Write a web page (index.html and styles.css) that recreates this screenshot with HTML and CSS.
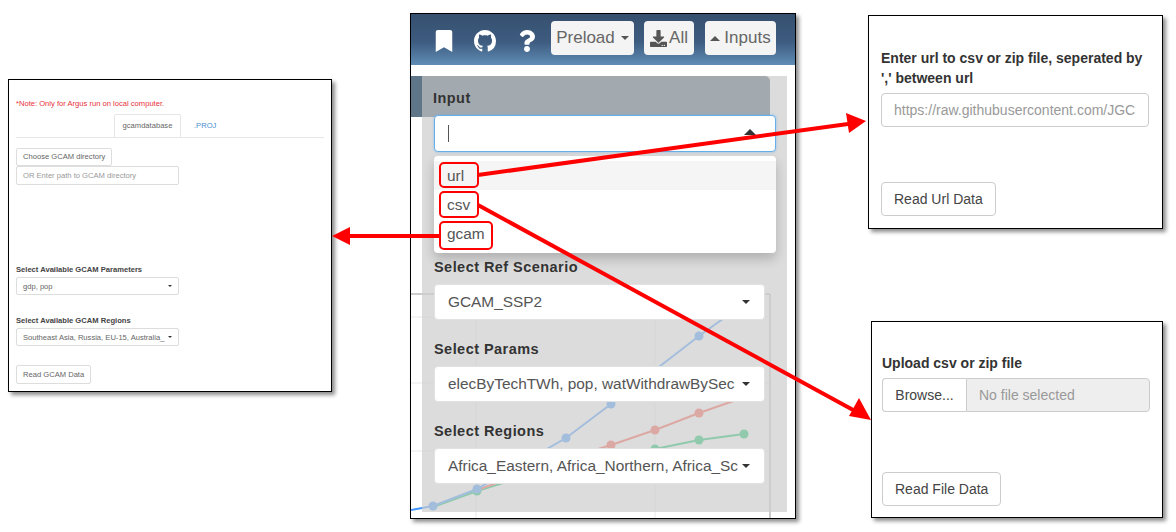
FILE: index.html
```html
<!DOCTYPE html>
<html>
    <head>
        <title>Argus inputs</title>
        <meta charset="UTF-8">
        <link rel="stylesheet" href="styles.css">
    </head>
    <body>
        <!-- left window: gcam -->
        <div class="shot gcamShot">
            <div class="gcamNote">*Note: Only for Argus run on local computer.</div>
            <div class="gcamTabs">
                <div class="gcamTab">gcamdatabase</div>
                <div class="gcamTabLink">.PROJ</div>
            </div>
            <div class="smallBtn chooseBtn">Choose GCAM directory</div>
            <div class="smallBox placeholder">OR Enter path to GCAM directory</div>
            <div class="smallLabel paramsLabel">Select Available GCAM Parameters</div>
            <div class="smallBox smallSelect"><span class="clip">gdp, pop</span><i class="caret"></i></div>
            <div class="smallLabel regionsLabel">Select Available GCAM Regions</div>
            <div class="smallBox smallSelect"><span class="clip">Southeast Asia, Russia, EU-15, Australia_</span><i class="caret"></i></div>
            <div class="smallBtn readGcam">Read GCAM Data</div>
        </div>

        <!-- middle window: app -->
        <div class="shot appShot">
            <div class="appHeader">
                <svg class="navIcon bookmark" viewBox="0 0 384 512"><path d="M0 512V48C0 21.49 21.49 0 48 0h288c26.51 0 48 21.49 48 48v464L192 400 0 512z"/></svg>
                <svg class="navIcon github" viewBox="0 0 16 16"><path d="M8 0C3.58 0 0 3.58 0 8c0 3.54 2.29 6.53 5.47 7.59.4.07.55-.17.55-.38 0-.19-.01-.82-.01-1.49-2.01.37-2.53-.49-2.69-.94-.09-.23-.48-.94-.82-1.13-.28-.15-.68-.52-.01-.53.63-.01 1.08.58 1.23.82.72 1.21 1.87.87 2.33.66.07-.52.28-.87.51-1.07-1.78-.2-3.64-.89-3.64-3.95 0-.87.31-1.59.82-2.15-.08-.2-.36-1.02.08-2.12 0 0 .67-.21 2.2.82.64-.18 1.32-.27 2-.27.68 0 1.36.09 2 .27 1.53-1.04 2.2-.82 2.2-.82.44 1.1.16 1.92.08 2.12.51.56.82 1.27.82 2.15 0 3.07-1.87 3.75-3.65 3.95.29.25.54.73.54 1.48 0 1.07-.01 1.93-.01 2.2 0 .21.15.46.55.38A8.013 8.013 0 0016 8c0-4.42-3.58-8-8-8z"/></svg>
                <svg class="navIcon question" viewBox="0 0 384 512"><path d="M202.021 0C122.202 0 70.503 32.703 29.914 91.026c-7.363 10.58-5.093 25.086 5.178 32.874l43.138 32.709c10.373 7.865 25.132 6.026 33.253-4.148 25.049-31.381 43.63-49.449 82.757-49.449 30.764 0 68.816 19.799 68.816 49.631 0 22.552-18.617 34.134-48.993 51.164-35.423 19.86-82.299 44.576-82.299 106.405V320c0 13.255 10.745 24 24 24h72.471c13.255 0 24-10.745 24-24v-5.773c0-42.86 125.268-44.645 125.268-160.627C377.504 66.256 286.902 0 202.021 0zM192 373.459c-38.196 0-69.271 31.075-69.271 69.271 0 38.195 31.075 69.27 69.271 69.27s69.271-31.075 69.271-69.271-31.075-69.27-69.271-69.27z"/></svg>
                <div class="navBtn preloadBtn">Preload<i class="caret"></i></div>
                <div class="navBtn allBtn"><svg class="dlIcon" viewBox="0 0 512 512"><path d="M216 0h80c13.3 0 24 10.7 24 24v168h87.7c17.8 0 26.7 21.5 14.1 34.1L269.7 378.3c-7.5 7.5-19.8 7.5-27.3 0L90.1 226.1c-12.6-12.6-3.7-34.1 14.1-34.1H192V24c0-13.3 10.7-24 24-24zm296 376v112c0 13.3-10.7 24-24 24H24c-13.3 0-24-10.7-24-24V376c0-13.3 10.7-24 24-24h146.7l49 49c20.1 20.1 52.5 20.1 72.6 0l49-49H488c13.3 0 24 10.7 24 24zm-124 88c0-11-9-20-20-20s-20 9-20 20 9 20 20 20 20-9 20-20zm64 0c0-11-9-20-20-20s-20 9-20 20 9 20 20 20 20-9 20-20z"/></svg>All</div>
                <div class="navBtn inputsBtn"><i class="caret caretUp"></i>Inputs</div>
            </div>
            <div class="appBody">
                <div class="plotBox">
                    <div class="plotTitle"></div>
                    <svg class="plot" viewBox="411 117 384 402">
                        <g class="grid">
                            <path d="M411 317H770M411 383H770M411 451H770M476 294V519M655 294V519"/>
                        </g>
                        <path class="frame" d="M411 294H770V519"/>
                        <g class="series seriesGreen">
                            <path d="M433 507L477 491L566 464L655 449L699 440L744 434"/>
                            <circle cx="477" cy="491" r="4.5"/><circle cx="655" cy="449" r="4.5"/><circle cx="699" cy="440" r="4.5"/><circle cx="744" cy="434" r="4.5"/>
                        </g>
                        <g class="series seriesRed">
                            <path d="M477 490L566 459L611 445L655 430L699 413L745 397"/>
                            <circle cx="611" cy="445" r="4.5"/><circle cx="655" cy="430" r="4.5"/><circle cx="699" cy="413" r="4.5"/>
                        </g>
                        <g class="series seriesBlue">
                            <path d="M411 510L433 506L477 489L566 438L611 404L699 336L745 303"/>
                            <circle cx="433" cy="506" r="4.5"/><circle cx="477" cy="489" r="4.5"/><circle cx="566" cy="438" r="4.5"/><circle cx="611" cy="404" r="4.5"/><circle cx="699" cy="336" r="4.5"/>
                        </g>
                    </svg>
                </div>
                <div class="sidebar">
                    <div class="field inputField">
                        <label class="fieldLabel">Input</label>
                        <div class="selectBox selectOpen"><span class="cursor"></span><i class="caret caretUp"></i></div>
                        <div class="dropdown">
                            <div class="dropItem dropActive">url</div>
                            <div class="dropItem">csv</div>
                            <div class="dropItem">gcam</div>
                        </div>
                    </div>
                    <div class="field">
                        <label class="fieldLabel">Select Ref Scenario</label>
                        <div class="selectBox"><span class="clip">GCAM_SSP2</span><i class="caret"></i></div>
                    </div>
                    <div class="field">
                        <label class="fieldLabel">Select Params</label>
                        <div class="selectBox"><span class="clip">elecByTechTWh, pop, watWithdrawBySec</span><i class="caret"></i></div>
                    </div>
                    <div class="field">
                        <label class="fieldLabel">Select Regions</label>
                        <div class="selectBox"><span class="clip">Africa_Eastern, Africa_Northern, Africa_Sc</span><i class="caret"></i></div>
                    </div>
                </div>
            </div>
        </div>

        <!-- right windows: url and csv -->
        <div class="shot urlShot">
            <div class="panelLabel">Enter url to csv or zip file, seperated by ',' between url</div>
            <div class="panelInput placeholder"><span class="clip">https://raw.githubusercontent.com/JGC</span></div>
            <div class="panelBtn urlBtn">Read Url Data</div>
        </div>
        <div class="shot csvShot">
            <div class="panelLabel">Upload csv or zip file</div>
            <div class="fileGroup">
                <div class="browseBtn">Browse...</div>
                <div class="fileName">No file selected</div>
            </div>
            <div class="panelBtn fileBtn">Read File Data</div>
        </div>

        <!-- callouts over everything -->
        <svg class="callouts" viewBox="0 0 1176 532">
            <rect x="440" y="163" width="38" height="24" rx="4"/>
            <rect x="440" y="192" width="38" height="25" rx="4"/>
            <rect x="440" y="222" width="52" height="27" rx="4"/>
            <path d="M478 175L848 124"/>
            <path d="M478 205L855 411"/>
            <path d="M440 236H348"/>
            <polygon points="866,121 846,113 849,133"/>
            <polygon points="871,420 849,416 859,398"/>
            <polygon points="332,236 350,227 350,245"/>
        </svg>
    </body>
</html>
```
FILE: styles.css
```css
html, body{
    margin: 0;
    height: 100%;
}
body{
    position: relative;
    width: 1176px;
    height: 532px;
    overflow: hidden;
    background-color: #fff;
    font-family: "Liberation Sans", Arial, sans-serif;
    color: #555;
}
.shot{
    position: absolute;
    box-sizing: border-box;
    background-color: #fff;
    border: 1px solid #000;
    box-shadow: 3px 3px 4px rgba(0,0,0,0.45);
}
.clip{
    display: block;
    flex: 1;
    min-width: 0;
    white-space: nowrap;
}
.caret{
    display: block;
    flex: none;
    width: 0;
    height: 0;
    border-left: 4px solid transparent;
    border-right: 4px solid transparent;
    border-top: 4px solid #333;
}
.caretUp{
    border-top: 0;
    border-bottom: 5px solid #333;
}
.placeholder{
    color: #999;
}

/* left window */
.gcamShot{
    left: 8px;
    top: 79px;
    width: 324px;
    height: 313px;
    padding: 19px 7px 0 7px;
    font-size: 7.6px;
    color: #666;
}
.gcamNote{
    color: #e8303a;
    line-height: 10px;
    height: 10px;
}
.gcamTabs{
    display: flex;
    height: 23px;
    margin-top: 5px;
    padding-left: 98px;
    border-bottom: 1px solid #e6e6e6;
}
.gcamTab{
    box-sizing: border-box;
    width: 67px;
    height: 23px;
    line-height: 21px;
    text-align: center;
    background-color: #fff;
    border: 1px solid #e6e6e6;
    border-bottom: 0;
    border-radius: 2px 2px 0 0;
}
.gcamTabLink{
    margin-left: 13px;
    line-height: 23px;
    color: #4a90d0;
}
.smallBtn, .smallBox{
    box-sizing: border-box;
    border: 1px solid #ddd;
    border-radius: 2px;
    height: 19px;
    line-height: 17px;
    padding: 0 6px;
    background-color: #fff;
}
.smallBtn{
    width: max-content;
}
.chooseBtn{
    margin-top: 10px;
    height: 18px;
    line-height: 16px;
}
.smallBox{
    width: 163px;
}
.smallSelect{
    display: flex;
    align-items: center;
    gap: 3px;
    height: 18px;
    padding-right: 6px;
}
.smallSelect .caret{
    border-left-width: 2px;
    border-right-width: 2px;
    border-top-width: 2px;
}
.smallLabel{
    font-weight: bold;
    line-height: 10px;
    color: #444;
    margin-bottom: 2px;
}
.paramsLabel{
    margin-top: 80px;
}
.regionsLabel{
    margin-top: 21px;
}
.readGcam{
    margin-top: 19px;
}

/* middle window */
.appShot{
    left: 410px;
    top: 13px;
    width: 386px;
    height: 506px;
    overflow: hidden;
}
.appHeader{
    display: flex;
    align-items: center;
    box-sizing: border-box;
    height: 51px;
    padding: 0 0 3px 24px;
    background: linear-gradient(to bottom, #36506f 0%, #3e5c80 55%, #5f8cb5 100%);
}
.navIcon{
    display: block;
    flex: none;
    height: 22px;
    margin-top: 6px;
    fill: #fff;
}
.bookmark{
    width: 18px;
}
.github{
    width: 22px;
    margin-left: 21px;
}
.question{
    width: 18px;
    margin-left: 22px;
}
.navBtn{
    display: flex;
    align-items: center;
    justify-content: center;
    box-sizing: border-box;
    height: 34px;
    background-color: #f4f4f4;
    border-radius: 4px;
    font-size: 17px;
    color: #666;
}
.preloadBtn{
    width: 83px;
    margin-left: 15px;
    gap: 6px;
}
.preloadBtn .caret{
    border-top-color: #555;
}
.allBtn{
    width: 50px;
    margin-left: 10px;
    gap: 2px;
}
.dlIcon{
    display: block;
    width: 17px;
    height: 17px;
    fill: #555;
}
.inputsBtn{
    width: 71px;
    margin-left: 11px;
    gap: 4px;
}
.inputsBtn .caret{
    border-left-width: 5px;
    border-right-width: 5px;
    border-bottom-color: #555;
}
.appBody{
    position: relative;
    height: 453px;
}
.plotBox{
    width: 384px;
    padding-top: 11px;
}
.plotTitle{
    width: 359px;
    height: 41px;
    background: linear-gradient(to right, #5f7688 11px, #415969 11px);
    border-top-right-radius: 5px;
}
.plot{
    display: block;
    width: 384px;
    height: 402px;
}
.grid path{
    fill: none;
    stroke: #e8e8e8;
    stroke-width: 1;
}
.frame{
    fill: none;
    stroke: #999;
    stroke-width: 1;
}
.series path{
    fill: none;
    stroke-width: 2;
}
.seriesBlue path{
    stroke: #4197ff;
}
.seriesBlue circle{
    fill: #4197ff;
}
.seriesRed path{
    stroke: #ff5244;
}
.seriesRed circle{
    fill: #ff5244;
}
.seriesGreen path{
    stroke: #00c05f;
}
.seriesGreen circle{
    fill: #00c05f;
}
.sidebar{
    position: absolute;
    left: 11px;
    top: 11px;
    box-sizing: border-box;
    width: 365px;
    height: 436px;
    padding: 13px 0 0 12px;
    background-color: rgba(205,205,205,0.7);
}
.field{
    position: relative;
    width: 331px;
    margin-bottom: 20px;
}
.inputField{
    width: 342px;
    margin-bottom: 106px;
}
.fieldLabel{
    display: block;
    height: 18px;
    line-height: 18px;
    margin-bottom: 8px;
    font-size: 14.5px;
    font-weight: bold;
    letter-spacing: 0.45px;
    color: #333;
}
.inputField .fieldLabel{
    margin-left: -1px;
}
.selectBox{
    display: flex;
    align-items: center;
    gap: 6px;
    box-sizing: border-box;
    height: 36px;
    padding: 0 14px 0 13px;
    background-color: #fff;
    border: 1px solid #e2e2e2;
    border-radius: 4px;
    font-size: 15.4px;
    color: #555;
}
.selectOpen{
    height: 37px;
    justify-content: space-between;
    padding-right: 19px;
    border: 1px solid #66afe9;
    box-shadow: 0 0 3px rgba(102,175,233,0.6);
}
.cursor{
    display: block;
    width: 1px;
    height: 17px;
    background-color: #555;
}
.selectOpen .caretUp{
    border-left-width: 6px;
    border-right-width: 6px;
    border-bottom-width: 6px;
    margin-top: -3px;
}
.dropdown{
    position: absolute;
    left: 0;
    right: 0;
    top: 67px;
    box-sizing: border-box;
    height: 97px;
    padding: 5px 0;
    background-color: #fff;
    border-radius: 4px;
    box-shadow: 0 6px 12px rgba(0,0,0,0.2);
    font-size: 15.4px;
    color: #555;
}
.dropItem{
    height: 29px;
    line-height: 29px;
    padding-left: 13px;
}
.dropActive{
    background-color: #f5f5f5;
}

/* right windows */
.urlShot{
    left: 868px;
    top: 15px;
    width: 295px;
    height: 214px;
    padding: 32px 13px 0 12px;
}
.csvShot{
    left: 871px;
    top: 321px;
    width: 292px;
    height: 197px;
    padding: 31px 12px 0 10px;
}
.panelLabel{
    font-size: 14px;
    font-weight: bold;
    line-height: 20px;
    color: #333;
    margin-bottom: 5px;
}
.panelInput{
    display: flex;
    align-items: center;
    box-sizing: border-box;
    height: 34px;
    padding: 0 12px;
    border: 1px solid #ccc;
    border-radius: 4px;
    font-size: 14px;
}
.panelBtn{
    box-sizing: border-box;
    width: max-content;
    height: 34px;
    line-height: 32px;
    padding: 0 12px;
    border: 1px solid #ccc;
    border-radius: 4px;
    font-size: 14px;
    color: #444;
}
.urlBtn{
    margin-top: 55px;
}
.fileBtn{
    margin-top: 60px;
}
.fileGroup{
    display: flex;
    height: 34px;
    font-size: 14px;
}
.browseBtn{
    box-sizing: border-box;
    width: 84px;
    line-height: 32px;
    text-align: center;
    border: 1px solid #ccc;
    border-right: 0;
    border-radius: 4px 0 0 4px;
    color: #444;
}
.fileName{
    flex: 1;
    box-sizing: border-box;
    line-height: 32px;
    padding-left: 12px;
    background-color: #eee;
    border: 1px solid #ccc;
    border-radius: 0 4px 4px 0;
    color: #999;
}

/* red callouts */
.callouts{
    position: absolute;
    left: 0;
    top: 0;
    width: 1176px;
    height: 532px;
    pointer-events: none;
}
.callouts rect{
    fill: none;
    stroke: #f00;
    stroke-width: 2;
}
.callouts path{
    fill: none;
    stroke: #f00;
    stroke-width: 4;
}
.callouts polygon{
    fill: #f00;
}
```
